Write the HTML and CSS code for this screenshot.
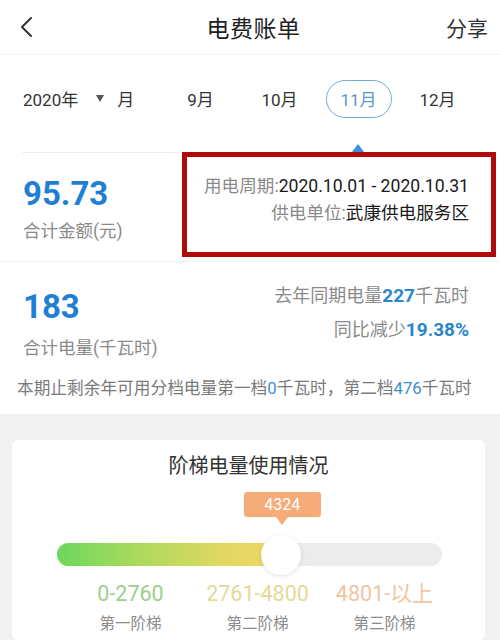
FILE: index.html
```html
<!DOCTYPE html>
<html lang="zh-CN">
<head>
<meta charset="utf-8">
<title>电费账单</title>
<link rel="stylesheet" href="styles.css">
</head>
<body>
<div class="page">
  <header class="topbar">
    <div class="back">
      <svg width="14" height="22" viewBox="0 0 14 22"><path d="M12 2 L3 11 L12 20" fill="none" stroke="#333" stroke-width="2" stroke-linecap="round" stroke-linejoin="round"/></svg>
    </div>
    <div class="title">电费账单</div>
    <div class="share">分享</div>
  </header>

  <nav class="monthbar">
    <div class="yearpick">
      <span class="year">2020年</span>
      <span class="tri"></span>
      <span class="mlabel">月</span>
    </div>
    <div class="months">
      <div class="mcell"><span>9月</span></div>
      <div class="mcell"><span>10月</span></div>
      <div class="mcell"><span class="pill">11月</span></div>
      <div class="mcell"><span>12月</span></div>
    </div>
  </nav>
  <div class="indicator"><span class="uptri"></span></div>

  <section class="summary">
    <div class="amount">
      <div class="bignum">95.73</div>
      <div class="sublabel">合计金额(元)</div>
    </div>
    <div class="info">
      <div class="line"><span class="muted">用电周期:</span>2020.10.01 - 2020.10.31</div>
      <div class="line"><span class="muted">供电单位:</span>武康供电服务区</div>
    </div>
  </section>
  <div class="divider"></div>

  <section class="usage">
    <div class="usage-top">
      <div class="usage-left">
        <div class="bignum">183</div>
        <div class="sublabel lbl2">合计电量(千瓦时)</div>
      </div>
      <div class="usage-right">
        <div class="line"><span class="muted">去年同期电量</span><b class="hl">227</b><span class="muted">千瓦时</span></div>
        <div class="line"><span class="muted">同比减少</span><b class="hl">19.38%</b></div>
      </div>
    </div>
    <div class="note">本期止剩余年可用分档电量第一档<span class="nb">0</span>千瓦时，第二档<span class="nb">476</span>千瓦时</div>
  </section>

  <section class="graybg">
    <div class="card">
      <div class="card-title">阶梯电量使用情况</div>
      <div class="slider">
        <div class="tooltip" style="left: 58.4%">4324</div>
        <div class="track"><div class="fill" style="width: 58.4%"></div></div>
        <div class="knob" style="left: 58.2%"></div>
      </div>
      <div class="tiers">
        <div class="tier t1">0-2760</div>
        <div class="tier t2">2761-4800</div>
        <div class="tier t3">4801-以上</div>
        <div class="tname">第一阶梯</div>
        <div class="tname">第二阶梯</div>
        <div class="tname">第三阶梯</div>
      </div>
    </div>
  </section>
</div>
</body>
</html>
```

FILE: styles.css
```css
* { box-sizing: border-box; }
html, body { margin: 0; padding: 0; }
body {
  width: 500px;
  height: 640px;
  overflow: hidden;
  background: #fff;
  font-family: "Roboto", "Noto Sans CJK SC", sans-serif;
  color: #222;
}
.page { width: 500px; height: 640px; overflow: hidden; }

.topbar {
  height: 55px;
  display: grid;
  grid-template-columns: 1fr auto 1fr;
  align-items: center;
  padding: 0 12px 0 19px;
  border-bottom: 1px solid #f6f6f6;
}
.back { display: flex; align-items: center; }
.title { font-size: 23px; color: #222; letter-spacing: 0.5px; }
.share { justify-self: end; font-size: 21px; color: #333; }

.monthbar {
  height: 87px;
  display: flex;
  align-items: center;
  font-size: 17px;
  color: #333;
}
.yearpick {
  width: 161px;
  padding-left: 23px;
  display: flex;
  align-items: center;
}
.tri {
  width: 0; height: 0;
  border-left: 4.5px solid transparent;
  border-right: 4.5px solid transparent;
  border-top: 7px solid #555;
  margin: 0 13px 0 18px;
}
.months { display: flex; }
.mcell {
  width: 79px;
  display: flex;
  justify-content: center;
  align-items: center;
}
.pill {
  width: 66px;
  height: 38px;
  border: 1.5px solid #74aed8;
  border-radius: 19px;
  color: #5b97c9;
  display: flex;
  align-items: center;
  justify-content: center;
}

.indicator { height: 10px; display: flex; align-items: flex-end; }
.uptri {
  margin-left: 352px;
  width: 0; height: 0;
  border-left: 6px solid transparent;
  border-right: 6px solid transparent;
  border-bottom: 8px solid #3d8fe0;
}

.summary {
  height: 109px;
  display: flex;
  align-items: flex-start;
}
.amount {
  width: 160px;
  margin-left: 22px;
  border-top: 1px solid #eeeeee;
  padding-top: 23px;
  padding-left: 1px;
}
.bignum {
  font-size: 33px;
  line-height: 36px;
  font-weight: 700;
  color: #1f7fd5;
}
.sublabel {
  margin-top: 7px;
  font-size: 17.5px;
  line-height: 24px;
  color: #8a8a8a;
}
.info {
  width: 314px;
  height: 105px;
  border: 5px solid #b00a0a;
  padding: 16px 22px 0 0;
  text-align: right;
  font-size: 17.6px;
  color: #1a1a1a;
}
.info .line { line-height: 27px; white-space: nowrap; }
.muted { color: #8a8a8a; }

.divider { height: 1px; background: #f0f0f0; }

.usage {
  height: 152px;
  padding-left: 17px;
}
.usage-top { display: flex; justify-content: space-between; align-items: flex-start; }
.usage-left { padding-top: 27px; padding-left: 6px; }
.lbl2 { margin-top: 11px; }
.usage-right {
  padding-top: 17px;
  padding-right: 31px;
  text-align: right;
  font-size: 18px;
}
.usage-right .line { line-height: 34px; white-space: nowrap; }
.hl { color: #2a86cc; font-weight: 700; font-size: 19px; }
.note {
  margin-top: 17px;
  font-size: 16.7px;
  line-height: 24px;
  color: #7a7a7a;
  white-space: nowrap;
}
.nb { color: #3a8fc8; }

.graybg {
  background: #f2f2f2;
  padding: 26px 15px 0 12px;
  height: 226px;
}
.card {
  background: #fff;
  border-radius: 6px;
  height: 200px;
  padding-top: 12px;
}
.card-title {
  text-align: center;
  font-size: 20px;
  line-height: 28px;
  color: #333;
}
.slider {
  position: relative;
  margin: 0 43px 0 45px;
  padding-top: 63px;
}
.track {
  height: 23px;
  border-radius: 12px;
  background: #ececec;
  overflow: hidden;
}
.fill {
  height: 100%;
  background: linear-gradient(to right, #6dd65e 0%, #a9da5c 35%, #e2d862 75%, #f2d567 100%);
}
.tooltip {
  position: absolute;
  top: 12px;
  width: 77px;
  height: 25px;
  margin-left: -38px;
  background: #f5ac78;
  border-radius: 3px;
  color: #fff;
  font-size: 16px;
  line-height: 25px;
  text-align: center;
}
.tooltip::after {
  content: "";
  position: absolute;
  left: 50%;
  bottom: -8px;
  margin-left: -6px;
  border-left: 6px solid transparent;
  border-right: 6px solid transparent;
  border-top: 8px solid #f5ac78;
}
.knob {
  position: absolute;
  top: 55px;
  width: 40px;
  height: 40px;
  margin-left: -20px;
  border-radius: 50%;
  background: #fff;
  box-shadow: 0 1px 5px rgba(0,0,0,0.12);
}

.tiers {
  margin: 14px 0 0 55px;
  width: 381px;
  display: grid;
  grid-template-columns: repeat(3, 127px);
  text-align: center;
}
.tier { font-size: 21.5px; line-height: 28px; }
.t1 { color: #9ccf8c; }
.t2 { color: #e4da98; }
.t3 { color: #efc6a2; }
.tname {
  margin-top: 5px;
  font-size: 15.5px;
  line-height: 22px;
  color: #8c8c8c;
}
```
